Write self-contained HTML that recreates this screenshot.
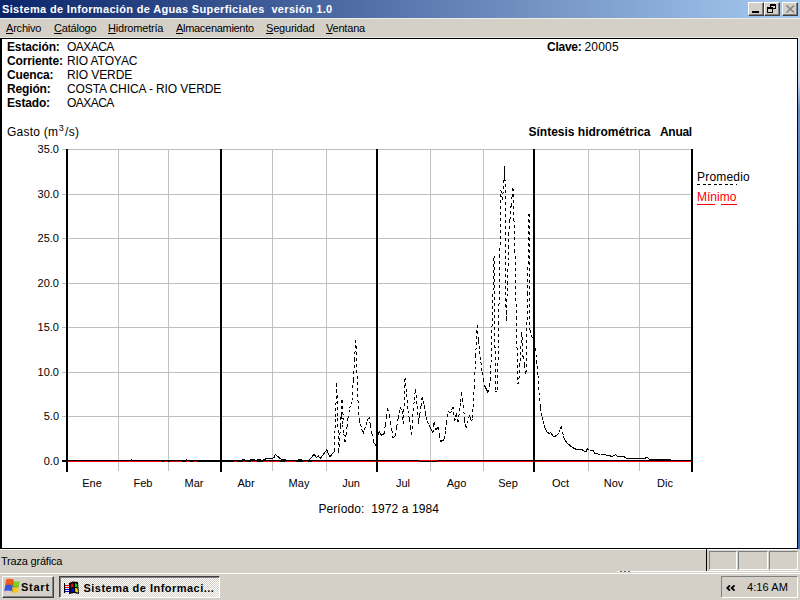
<!DOCTYPE html>
<html><head><meta charset="utf-8"><style>
*{margin:0;padding:0;box-sizing:border-box}
html,body{width:800px;height:600px;overflow:hidden;background:#D4D0C8;font-family:"Liberation Sans",sans-serif;font-size:11px;color:#000}
.abs{position:absolute;white-space:nowrap}
#title{left:0;top:0;width:800px;height:18px;background:linear-gradient(to right,#0A246A,#A6CAF0)}
.tb{position:absolute;top:2px;width:16px;height:14px;background:#D4D0C8;border-top:1px solid #fff;border-left:1px solid #fff;border-right:1px solid #404040;border-bottom:1px solid #404040;box-shadow:inset -1px -1px 0 #808080}
#menu{left:0;top:18px;width:800px;height:20px;background:#D4D0C8}
.mu{text-decoration:underline;text-underline-offset:1px}
#content{left:0;top:38px;width:798px;height:511px;background:#fff;border-style:solid;border-color:#000;border-width:1px 1px 1px 2px}
#desk{left:798px;top:38px;width:2px;height:511px;background:linear-gradient(to bottom,#d4e2f4 0,#c4d6ee 45px,#6a92cc 70px,#4672b8 200px,#3c68b0 100%)}
#status{left:0;top:549px;width:800px;height:24px;background:#D4D0C8}
.pnl{position:absolute;top:2px;height:19px;border-style:solid;border-width:1px;border-color:#808080 #fff #fff #808080}
#taskbar{left:0;top:573px;width:800px;height:27px;background:#D4D0C8;border-top:1px solid #fff}
.btn{position:absolute;border-style:solid;border-width:1px;border-color:#fff #404040 #404040 #fff;box-shadow:inset -1px -1px 0 #808080}
.btnp{position:absolute;border-style:solid;border-width:1px;border-color:#404040 #fff #fff #404040;box-shadow:inset 1px 1px 0 #808080;background:repeating-conic-gradient(#fff 0 25%,#D4D0C8 0 50%) 0 0/2px 2px}

</style></head><body>
<div id="title" class="abs">
<div class="abs" style="left:2px;top:3px;color:#fff;font-weight:bold;font-size:11px;line-height:13px;letter-spacing:0.33px">Sistema de Información de Aguas Superficiales&nbsp; versión 1.0</div>
<div class="tb" style="left:748px"><div class="abs" style="left:3px;top:8px;width:7px;height:2px;background:#000"></div></div>
<div class="tb" style="left:764px"><div class="abs" style="left:5px;top:1px;width:6px;height:5px;border:1px solid #000;border-top-width:2px"></div><div class="abs" style="left:2px;top:4px;width:6px;height:6px;border:1px solid #000;border-top-width:2px;background:#D4D0C8"></div></div>
<div class="tb" style="left:782px"><svg class="abs" style="left:3px;top:2px" width="9" height="8"><path d="M0.5,0.5 L8,7.5 M8,0.5 L0.5,7.5" stroke="#808080" stroke-width="1.4"/></svg></div>
</div>
<div id="menu" class="abs"><div class="abs" style="left:0;top:0;width:800px;height:1px;background:#EEECE6"></div><div class="abs" style="left:0;top:19px;width:800px;height:1px;background:#EAE8E2"></div>
<div class="abs" style="left:6px;top:5px;font-size:11px;line-height:11px;letter-spacing:-0.2px"><span class="mu">A</span>rchivo</div>
<div class="abs" style="left:54px;top:5px;font-size:11px;line-height:11px;letter-spacing:-0.2px"><span class="mu">C</span>atálogo</div>
<div class="abs" style="left:108px;top:5px;font-size:11px;line-height:11px;letter-spacing:-0.2px"><span class="mu">H</span>idrometría</div>
<div class="abs" style="left:176px;top:5px;font-size:11px;line-height:11px;letter-spacing:-0.3px"><span class="mu">A</span>lmacenamiento</div>
<div class="abs" style="left:266px;top:5px;font-size:11px;line-height:11px;letter-spacing:-0.2px"><span class="mu">S</span>eguridad</div>
<div class="abs" style="left:326px;top:5px;font-size:11px;line-height:11px;letter-spacing:-0.2px"><span class="mu">V</span>entana</div>
</div>
<div id="content" class="abs"></div>
<div id="desk" class="abs"></div>
<div id="status" class="abs"><div class="abs" style="left:0;top:0;width:797px;height:1px;background:#fff"></div>
<div class="abs" style="left:1px;top:7px;font-size:11px;line-height:11px;letter-spacing:-0.2px">Traza gráfica</div>
<div class="abs" style="left:617px;top:22px;width:183px;height:1px;background:#fff"></div>
<div class="abs" style="left:620px;top:22px;width:2px;height:1px;background:#606060"></div>
<div class="abs" style="left:624px;top:22px;width:2px;height:1px;background:#606060"></div>
<div class="abs" style="left:628px;top:22px;width:2px;height:1px;background:#606060"></div>
<div class="abs" style="left:706px;top:0;width:1px;height:22px;background:#000"></div>
<div class="pnl" style="left:709px;width:28px"></div>
<div class="pnl" style="left:738px;width:30px"></div>
<div class="pnl" style="left:769px;width:29px"></div>
</div>
<div id="taskbar" class="abs">
<div class="btn" style="left:2px;top:2px;width:52px;height:22px">
<svg class="abs" style="left:0;top:0" width="18" height="18" viewBox="0 0 18 18">
<path d="M3,2.5 Q6.5,1 10.5,2.5 L9.8,8.3 Q6,7 2.2,8.3 Z" fill="#F05A1A"/>
<path d="M10.5,4 Q13.5,5 16.5,4 L15.8,9.8 Q12.8,10.6 9.8,9.6 Z" fill="#78D020"/>
<path d="M2.2,8.5 Q6,7.2 9.6,8.6 L8.8,14.2 Q5,13 1.3,14.2 Z" fill="#3858E0"/>
<path d="M9.8,10 Q12.8,10.9 15.7,10 L15,15.5 Q11.8,16.4 9,15.3 Z" fill="#F6CC12"/>
<path d="M10.3,2.6 L9.5,15.3 M2.2,8.4 Q6,7.1 9.7,8.5 L9.8,9.7 Q12.8,10.7 15.8,9.9" stroke="#3a3a30" stroke-width="0.6" fill="none" opacity="0.5"/>
</svg>
<div class="abs" style="left:18px;top:5px;font-size:11px;line-height:11px;font-weight:bold;letter-spacing:0.75px">Start</div>
</div>
<div class="btnp" style="left:59px;top:2px;width:161px;height:22px">
<svg class="abs" style="left:4px;top:4px" width="16" height="14" viewBox="0 0 16 14">
<rect x="0" y="2" width="1" height="10" fill="#000"/>
<rect x="1" y="4" width="4" height="1" fill="#E00"/><rect x="1" y="6" width="4" height="1" fill="#E00"/><rect x="1" y="8" width="4" height="1" fill="#00E"/><rect x="1" y="10" width="4" height="1" fill="#00E"/>
<path d="M5,2 L9,0.5 L14,1 L15,13 L10,12 L5,13 Z" fill="#000"/>
<path d="M7,3 L9,2 L9.5,6 L7,6.5 Z" fill="#E00"/><path d="M11,2 L13,3 L13.5,6.5 L11,6 Z" fill="#0C0"/>
<path d="M7,7.5 L9.5,7 L10,11 L7,11.5 Z" fill="#00E"/><path d="M11,7 L13.5,7.5 L14,11.5 L11.5,11 Z" fill="#EE0"/>
</svg>
<div class="abs" style="left:23.5px;top:6px;font-size:11px;line-height:11px;font-weight:bold;letter-spacing:0.48px">Sistema de Informaci...</div>
</div>
<div class="abs" style="left:721px;top:2px;width:77px;height:22px;border-style:solid;border-width:1px;border-color:#808080 #fff #fff #808080">
<svg class="abs" style="left:4px;top:8px" width="10" height="6" viewBox="0 0 10 6"><path d="M4,0.3 L1.2,3 L4,5.7 M8.5,0.3 L5.7,3 L8.5,5.7" stroke="#000" stroke-width="1.8" fill="none"/></svg>
<div class="abs" style="left:25px;top:5px;font-size:11px;line-height:11px;letter-spacing:0.1px">4:16 AM</div>
</div>
</div>

<svg class="abs" style="left:0;top:0" width="800" height="600" viewBox="0 0 800 600"><rect x="62" y="149" width="630" height="1" fill="#C0C0C0"/><rect x="62" y="194" width="630" height="1" fill="#C0C0C0"/><rect x="62" y="238" width="630" height="1" fill="#C0C0C0"/><rect x="62" y="283" width="630" height="1" fill="#C0C0C0"/><rect x="62" y="327" width="630" height="1" fill="#C0C0C0"/><rect x="62" y="372" width="630" height="1" fill="#C0C0C0"/><rect x="62" y="416" width="630" height="1" fill="#C0C0C0"/><rect x="118" y="149" width="1" height="322" fill="#C0C0C0"/><rect x="168" y="149" width="1" height="322" fill="#C0C0C0"/><rect x="272" y="149" width="1" height="322" fill="#C0C0C0"/><rect x="326" y="149" width="1" height="322" fill="#C0C0C0"/><rect x="430" y="149" width="1" height="322" fill="#C0C0C0"/><rect x="483" y="149" width="1" height="322" fill="#C0C0C0"/><rect x="588" y="149" width="1" height="322" fill="#C0C0C0"/><rect x="639" y="149" width="1" height="322" fill="#C0C0C0"/><rect x="62" y="460" width="6" height="2" fill="#000"/><rect x="68" y="460" width="623" height="1" fill="#000"/><rect x="68" y="461" width="623" height="1" fill="#FF0000"/><rect x="162" y="461" width="2" height="1" fill="#000"/><rect x="168" y="461" width="2" height="1" fill="#000"/><rect x="182" y="461" width="4" height="1" fill="#000"/><rect x="190" y="461" width="3" height="1" fill="#000"/><rect x="197" y="461" width="37" height="1" fill="#000"/><rect x="237" y="461" width="6" height="1" fill="#000"/><rect x="245" y="461" width="6" height="1" fill="#000"/><rect x="257" y="461" width="6" height="1" fill="#000"/><rect x="280" y="461" width="5" height="1" fill="#000"/><rect x="296" y="461" width="7" height="1" fill="#000"/><rect x="308" y="461" width="4" height="1" fill="#000"/><rect x="419" y="460" width="18" height="1" fill="#FF0000"/><rect x="419" y="461" width="18" height="1" fill="#000"/><rect x="66" y="149" width="2" height="323" fill="#000"/><rect x="220" y="149" width="2" height="323" fill="#000"/><rect x="376" y="149" width="2" height="323" fill="#000"/><rect x="533" y="149" width="2" height="323" fill="#000"/><rect x="691" y="149" width="2" height="323" fill="#000"/><path d="M68.00,460.00L69.68,460.00M69.68,460.00L71.37,460.00M71.37,460.00L73.05,460.00M73.05,460.00L74.74,460.00M74.74,460.00L76.42,460.00M76.42,460.00L78.11,460.00M78.11,460.00L79.79,460.00M79.79,460.00L81.47,460.00M81.47,460.00L83.16,460.00M83.16,460.00L84.84,460.00M84.84,460.00L86.53,460.00M86.53,460.00L88.21,460.00M88.21,460.00L89.89,460.00M89.89,460.00L91.58,460.00M91.58,460.00L93.26,460.00M93.26,460.00L94.95,460.00M94.95,460.00L96.63,460.00M96.63,460.00L98.32,460.00M98.32,460.00L100.00,460.00M100.00,460.00L101.67,460.00M101.67,460.00L103.33,460.00M103.33,460.00L105.00,460.00M105.00,460.00L106.67,460.00M106.67,460.00L108.33,460.00M108.33,460.00L110.00,460.00M110.00,460.00L111.67,460.00M111.67,460.00L113.33,460.00M113.33,460.00L115.00,460.00M115.00,460.00L116.67,460.00M116.67,460.00L118.33,460.00M118.33,460.00L120.00,460.00M120.00,460.00L121.67,460.00M121.67,460.00L123.33,460.00M123.33,460.00L125.00,460.00M125.00,460.00L126.67,460.00M126.67,460.00L128.33,460.00M128.33,460.00L130.00,460.00M130.00,460.00L131.00,459.00M131.00,459.00L132.00,460.00M132.00,460.00L133.65,460.00M133.65,460.00L135.29,460.00M135.29,460.00L136.94,460.00M136.94,460.00L138.59,460.00M138.59,460.00L140.24,460.00M140.24,460.00L141.88,460.00M141.88,460.00L143.53,460.00M143.53,460.00L145.18,460.00M145.18,460.00L146.82,460.00M146.82,460.00L148.47,460.00M148.47,460.00L150.12,460.00M150.12,460.00L151.76,460.00M151.76,460.00L153.41,460.00M153.41,460.00L155.06,460.00M155.06,460.00L156.71,460.00M156.71,460.00L158.35,460.00M158.35,460.00L160.00,460.00M160.00,460.00L161.67,460.00M161.67,460.00L163.33,460.00M163.33,460.00L165.00,460.00M165.00,460.00L166.67,460.00M166.67,460.00L168.33,460.00M168.33,460.00L170.00,460.00M170.00,460.00L171.67,460.00M171.67,460.00L173.33,460.00M173.33,460.00L175.00,460.00M175.00,460.00L176.67,460.00M176.67,460.00L178.33,460.00M178.33,460.00L180.00,460.00M180.00,460.00L181.67,460.00M181.67,460.00L183.33,460.00M183.33,460.00L185.00,460.00M185.00,460.00L186.00,459.00M186.00,459.00L187.00,460.00M187.00,460.00L188.62,460.00M188.62,460.00L190.25,460.00M190.25,460.00L191.88,460.00M191.88,460.00L193.50,460.00M193.50,460.00L195.12,460.00M195.12,460.00L196.75,460.00M196.75,460.00L198.38,460.00M198.38,460.00L200.00,460.00M200.00,460.00L201.67,460.00M201.67,460.00L203.33,460.00M203.33,460.00L205.00,460.00M205.00,460.00L206.67,460.00M206.67,460.00L208.33,460.00M208.33,460.00L210.00,460.00M210.00,460.00L211.67,460.00M211.67,460.00L213.33,460.00M213.33,460.00L215.00,460.00M215.00,460.00L216.67,460.00M216.67,460.00L218.33,460.00M218.33,460.00L220.00,460.00M220.00,460.00L221.67,460.00M221.67,460.00L223.33,460.00M223.33,460.00L225.00,460.00M225.00,460.00L226.67,460.00M226.67,460.00L228.33,460.00M228.33,460.00L230.00,460.00M230.00,460.00L231.67,460.00M231.67,460.00L233.33,460.00M233.33,460.00L235.00,460.00M235.00,460.00L236.67,460.00M236.67,460.00L238.33,460.00M238.33,460.00L240.00,460.00M240.00,460.00L241.17,459.67M241.17,459.67L242.33,459.33M242.33,459.33L243.50,459.00M243.50,459.00L244.75,459.50M244.75,459.50L246.00,460.00M246.00,460.00L247.40,459.80M247.40,459.80L248.80,459.60M248.80,459.60L250.20,459.40M250.20,459.40L251.60,459.20M251.60,459.20L253.00,459.00M253.00,459.00L254.50,459.50M254.50,459.50L256.00,460.00M256.00,460.00L257.00,459.50M257.00,459.50L258.00,459.00M258.00,459.00L259.33,459.33M259.33,459.33L260.67,459.67M260.67,459.67L262.00,460.00M262.00,460.00L263.50,459.25M263.50,459.25L265.00,458.50M265.00,458.50L266.67,458.33M266.67,458.33L268.33,458.17M268.33,458.17L270.00,458.00M270.00,458.00L271.17,457.80M271.17,457.80L272.33,457.60M272.33,457.60L273.50,457.40M273.50,457.40L274.10,453.30M274.10,453.30L275.65,454.60M275.65,454.60L277.20,455.90M277.20,455.90L278.75,457.20M278.75,457.20L280.30,458.50M280.30,458.50L281.60,458.75M281.60,458.75L282.90,459.00M282.90,459.00L284.20,459.25M284.20,459.25L285.50,459.50M285.50,459.50L287.08,459.58M287.08,459.58L288.67,459.67M288.67,459.67L290.25,459.75M290.25,459.75L291.83,459.83M291.83,459.83L293.42,459.92M293.42,459.92L295.00,460.00M295.00,460.00L296.67,459.67M296.67,459.67L298.33,459.33M298.33,459.33L300.00,459.00M300.00,459.00L301.50,459.50M301.50,459.50L303.00,460.00M303.00,460.00L304.67,460.00M304.67,460.00L306.33,460.00M306.33,460.00L308.00,460.00M308.00,460.00L309.50,458.40M309.50,458.40L311.00,456.80M311.00,456.80L312.50,455.20M312.50,455.20L314.00,453.60M314.00,453.60L315.50,457.80M315.50,457.80L316.65,456.40M316.65,456.40L317.80,455.00M317.80,455.00L319.30,458.50M319.30,458.50L320.72,456.66M320.72,456.66L322.14,454.82M322.14,454.82L323.56,452.98M323.56,452.98L324.98,451.14M324.98,451.14L326.40,449.30M326.40,449.30L327.85,452.80M327.85,452.80L329.30,456.30M329.30,456.30L330.80,454.53M330.80,454.53L332.30,452.77M332.30,452.77L333.80,451.00M333.80,451.00L335.00,416.85M335.00,416.85L336.20,382.70M336.20,382.70L337.25,417.75M337.25,417.75L338.30,452.80M338.30,452.80L339.90,426.00M339.90,426.00L341.50,399.20M341.50,399.20L343.00,420.00M343.00,420.00L341.00,415.00M341.00,415.00L342.17,424.00M342.17,424.00L343.33,433.00M343.33,433.00L344.50,442.00M344.50,442.00L345.50,434.50M345.50,434.50L346.50,426.25M346.50,426.25L347.50,418.00M347.50,418.00L349.00,408.00M349.00,408.00L350.25,404.00M350.25,404.00L351.50,400.00M351.50,400.00L352.77,379.77M352.77,379.77L354.03,359.53M354.03,359.53L355.30,339.30M355.30,339.30L356.40,369.65M356.40,369.65L357.50,400.00M357.50,400.00L358.70,419.00M358.70,419.00L360.00,423.83M360.00,423.83L361.30,428.67M361.30,428.67L362.60,433.50M362.60,433.50L364.05,429.12M364.05,429.12L365.50,424.75M365.50,424.75L366.95,420.38M366.95,420.38L368.40,416.00M368.40,416.00L369.93,424.50M369.93,424.50L371.47,433.00M371.47,433.00L373.00,441.50M373.00,441.50L374.23,443.23M374.23,443.23L375.47,444.97M375.47,444.97L376.70,446.70M376.70,446.70L378.20,430.00M378.20,430.00L379.35,432.35M379.35,432.35L380.50,434.70M380.50,434.70L382.00,433.95M382.00,433.95L383.50,433.20M383.50,433.20L384.73,424.70M384.73,424.70L385.97,416.20M385.97,416.20L387.20,407.70M387.20,407.70L388.70,414.85M388.70,414.85L390.20,422.00M390.20,422.00L391.35,429.50M391.35,429.50L392.50,437.00M392.50,437.00L393.60,436.25M393.60,436.25L394.70,435.50M394.70,435.50L396.20,426.50M396.20,426.50L397.70,417.50M397.70,417.50L398.85,412.25M398.85,412.25L400.00,407.00M400.00,407.00L401.50,410.70M401.50,410.70L403.00,423.50M403.00,423.50L404.50,377.00M404.50,377.00L406.00,393.50M406.00,393.50L407.50,410.00M407.50,410.00L408.73,418.23M408.73,418.23L409.97,426.47M409.97,426.47L411.20,434.70M411.20,434.70L412.70,410.00M412.70,410.00L413.85,399.10M413.85,399.10L415.00,388.20M415.00,388.20L416.50,405.85M416.50,405.85L418.00,423.50M418.00,423.50L419.23,414.50M419.23,414.50L420.47,405.50M420.47,405.50L421.70,396.50M421.70,396.50L422.85,400.75M422.85,400.75L424.00,405.00M424.00,405.00L425.00,413.00M425.00,413.00L426.00,417.00M426.00,417.00L427.00,421.00M427.00,421.00L428.50,424.50M428.50,424.50L430.00,428.00M430.00,428.00L431.25,430.00M431.25,430.00L432.50,432.00M432.50,432.00L433.50,422.00M433.50,422.00L435.00,430.00M435.00,430.00L436.25,428.50M436.25,428.50L437.50,427.00M437.50,427.00L439.00,434.00M439.00,434.00L440.00,441.00M440.00,441.00L441.33,440.33M441.33,440.33L442.67,439.67M442.67,439.67L444.00,439.00M444.00,439.00L445.00,430.00M445.00,430.00L446.00,422.00M446.00,422.00L447.00,416.50M447.00,416.50L448.00,411.00M448.00,411.00L449.00,412.00M449.00,412.00L450.00,413.00M450.00,413.00L451.25,409.50M451.25,409.50L452.50,406.00M452.50,406.00L454.00,421.00M454.00,421.00L455.00,417.00M455.00,417.00L456.00,413.00M456.00,413.00L457.50,422.00M457.50,422.00L459.00,411.00M459.00,411.00L460.00,401.50M460.00,401.50L461.00,392.00M461.00,392.00L462.00,398.50M462.00,398.50L463.00,405.00M463.00,405.00L464.00,420.00M464.00,420.00L465.00,424.00M465.00,424.00L466.00,428.00M466.00,428.00L467.00,423.00M467.00,423.00L468.00,418.00M468.00,418.00L469.00,415.00M469.00,415.00L470.00,418.00M470.00,418.00L471.00,421.00M471.00,421.00L472.00,418.00M472.00,418.00L473.57,387.00M473.57,387.00L475.13,356.00M475.13,356.00L476.70,325.00M476.70,325.00L478.00,340.00M478.00,340.00L479.17,350.67M479.17,350.67L480.33,361.33M480.33,361.33L481.50,372.00M481.50,372.00L482.75,378.50M482.75,378.50L484.00,385.00M484.00,385.00L485.17,387.33M485.17,387.33L486.33,389.67M486.33,389.67L487.50,392.00M487.50,392.00L488.75,386.00M488.75,386.00L490.00,380.00M490.00,380.00L491.17,338.33M491.17,338.33L492.33,296.67M492.33,296.67L493.50,255.00M493.50,255.00L495.00,391.50M495.00,391.50L496.00,390.75M496.00,390.75L497.00,390.00M497.00,390.00L498.17,323.33M498.17,323.33L499.33,256.67M499.33,256.67L500.50,190.00M500.50,190.00L502.00,200.00M502.00,200.00L503.20,183.00M503.20,183.00L504.40,166.00M504.40,166.00L505.60,320.00M505.60,320.00L506.50,296.00M506.50,296.00L507.40,272.00M507.40,272.00L508.30,234.00M508.30,234.00L509.45,219.50M509.45,219.50L510.60,205.00M510.60,205.00L511.55,196.50M511.55,196.50L512.50,188.00M512.50,188.00L513.45,219.00M513.45,219.00L514.40,250.00M514.40,250.00L515.85,317.00M515.85,317.00L517.30,384.00M517.30,384.00L518.50,378.00M518.50,378.00L519.90,354.50M519.90,354.50L521.30,331.00M521.30,331.00L522.50,356.00M522.50,356.00L524.00,364.50M524.00,364.50L525.50,373.00M525.50,373.00L527.00,293.50M527.00,293.50L528.50,214.00M528.50,214.00L529.50,330.00M529.50,330.00L531.00,335.00M531.00,335.00L532.50,340.00M532.50,340.00L533.75,344.00M533.75,344.00L535.00,348.00M535.00,348.00L536.00,360.00M536.00,360.00L537.50,375.00M537.50,375.00L538.50,392.00M538.50,392.00L540.00,407.00M540.00,407.00L541.50,417.00M541.50,417.00L542.50,421.00M542.50,421.00L543.50,425.00M543.50,425.00L544.75,428.00M544.75,428.00L546.00,431.00M546.00,431.00L547.25,432.00M547.25,432.00L548.50,433.00M548.50,433.00L550.00,432.00M550.00,432.00L551.50,434.00M551.50,434.00L553.00,436.00M553.00,436.00L554.33,435.67M554.33,435.67L555.67,435.33M555.67,435.33L557.00,435.00M557.00,435.00L558.17,432.00M558.17,432.00L559.33,429.00M559.33,429.00L560.50,426.00M560.50,426.00L562.00,432.00M562.00,432.00L563.00,435.50M563.00,435.50L564.00,439.00M564.00,439.00L565.50,441.00M565.50,441.00L567.00,443.00M567.00,443.00L568.67,444.33M568.67,444.33L570.33,445.67M570.33,445.67L572.00,447.00M572.00,447.00L573.33,447.67M573.33,447.67L574.67,448.33M574.67,448.33L576.00,449.00M576.00,449.00L577.50,449.12M577.50,449.12L579.00,449.25M579.00,449.25L580.50,449.38M580.50,449.38L582.00,449.50M582.00,449.50L583.50,450.75M583.50,450.75L585.00,452.00M585.00,452.00L586.00,450.00M586.00,450.00L587.00,448.00M587.00,448.00L588.00,449.00M588.00,449.00L589.00,450.00M589.00,450.00L590.33,450.00M590.33,450.00L591.67,450.00M591.67,450.00L593.00,450.00M593.00,450.00L594.00,453.00M594.00,453.00L595.50,453.25M595.50,453.25L597.00,453.50M597.00,453.50L598.50,453.75M598.50,453.75L600.00,454.00M600.00,454.00L601.50,454.00M601.50,454.00L603.00,454.00M603.00,454.00L604.67,454.33M604.67,454.33L606.33,454.67M606.33,454.67L608.00,455.00M608.00,455.00L609.33,455.33M609.33,455.33L610.67,455.67M610.67,455.67L612.00,456.00M612.00,456.00L613.50,455.00M613.50,455.00L615.00,454.00M615.00,454.00L616.00,455.00M616.00,455.00L617.00,456.00M617.00,456.00L618.40,456.10M618.40,456.10L619.80,456.20M619.80,456.20L621.20,456.30M621.20,456.30L622.60,456.40M622.60,456.40L624.00,456.50M624.00,456.50L625.00,457.50M625.00,457.50L626.67,457.50M626.67,457.50L628.33,457.50M628.33,457.50L630.00,457.50M630.00,457.50L631.67,457.50M631.67,457.50L633.33,457.50M633.33,457.50L635.00,457.50M635.00,457.50L636.67,457.50M636.67,457.50L638.33,457.50M638.33,457.50L640.00,457.50M640.00,457.50L641.67,457.50M641.67,457.50L643.33,457.50M643.33,457.50L645.00,457.50M645.00,457.50L646.00,457.25M646.00,457.25L647.00,457.00M647.00,457.00L648.00,458.50M648.00,458.50L649.69,458.50M649.69,458.50L651.38,458.50M651.38,458.50L653.08,458.50M653.08,458.50L654.77,458.50M654.77,458.50L656.46,458.50M656.46,458.50L658.15,458.50M658.15,458.50L659.85,458.50M659.85,458.50L661.54,458.50M661.54,458.50L663.23,458.50M663.23,458.50L664.92,458.50M664.92,458.50L666.62,458.50M666.62,458.50L668.31,458.50M668.31,458.50L670.00,458.50M670.00,458.50L670.00,459.50M670.00,459.50L671.62,459.50M671.62,459.50L673.23,459.50M673.23,459.50L674.85,459.50M674.85,459.50L676.46,459.50M676.46,459.50L678.08,459.50M678.08,459.50L679.69,459.50M679.69,459.50L681.31,459.50M681.31,459.50L682.92,459.50M682.92,459.50L684.54,459.50M684.54,459.50L686.15,459.50M686.15,459.50L687.77,459.50M687.77,459.50L689.38,459.50M689.38,459.50L691.00,459.50" transform="translate(0.5,0.5)" stroke="#000" stroke-width="1" stroke-dasharray="3 3" fill="none" shape-rendering="crispEdges"/></svg>
<svg class="abs" style="left:0;top:0" width="800" height="600">
<path d="M697,184.5 L737,184.5" stroke="#000" stroke-dasharray="3 2.5" shape-rendering="crispEdges"/>
<rect x="697" y="204" width="18" height="1" fill="#FF0000"/><rect x="721" y="204" width="16" height="1" fill="#FF0000"/>
</svg>
<div class="abs" style="top:40.54px;font-size:12px;line-height:12px;color:#000;font-weight:bold;letter-spacing:-0.15px;left:7px;">Estación:</div><div class="abs" style="top:41.14px;font-size:12px;line-height:12px;color:#000;letter-spacing:-0.55px;left:67px;">OAXACA</div><div class="abs" style="top:54.54px;font-size:12px;line-height:12px;color:#000;font-weight:bold;letter-spacing:-0.15px;left:7px;">Corriente:</div><div class="abs" style="top:55.14px;font-size:12px;line-height:12px;color:#000;letter-spacing:-0.1px;left:67px;">RIO ATOYAC</div><div class="abs" style="top:68.54px;font-size:12px;line-height:12px;color:#000;font-weight:bold;letter-spacing:-0.15px;left:7px;">Cuenca:</div><div class="abs" style="top:69.14px;font-size:12px;line-height:12px;color:#000;letter-spacing:-0.1px;left:67px;">RIO VERDE</div><div class="abs" style="top:82.54px;font-size:12px;line-height:12px;color:#000;font-weight:bold;letter-spacing:-0.15px;left:7px;">Región:</div><div class="abs" style="top:83.14px;font-size:12px;line-height:12px;color:#000;letter-spacing:-0.1px;left:67px;">COSTA CHICA - RIO VERDE</div><div class="abs" style="top:96.54px;font-size:12px;line-height:12px;color:#000;font-weight:bold;letter-spacing:-0.15px;left:7px;">Estado:</div><div class="abs" style="top:97.14px;font-size:12px;line-height:12px;color:#000;letter-spacing:-0.55px;left:67px;">OAXACA</div><div class="abs" style="top:40.54px;font-size:12px;line-height:12px;color:#000;font-weight:bold;letter-spacing:-0.25px;left:547px;">Clave:</div><div class="abs" style="top:41.14px;font-size:12px;line-height:12px;color:#000;letter-spacing:0.2px;left:584.5px;">20005</div><div class="abs" style="top:125.64px;font-size:12px;line-height:12px;color:#000;letter-spacing:0.25px;left:7px;">Gasto (m<span style="font-size:9px;position:relative;top:-5px;margin:0 1px 0 0.5px">3</span>/s)</div><div class="abs" style="top:126.04px;font-size:12px;line-height:12px;color:#000;font-weight:bold;left:528.5px;">Síntesis hidrométrica</div><div class="abs" style="top:126.04px;font-size:12px;line-height:12px;color:#000;font-weight:bold;letter-spacing:-0.3px;left:660px;">Anual</div><div class="abs" style="top:143.69px;font-size:11px;line-height:11px;color:#000;right:741px;">35.0</div><div class="abs" style="top:188.69px;font-size:11px;line-height:11px;color:#000;right:741px;">30.0</div><div class="abs" style="top:232.69px;font-size:11px;line-height:11px;color:#000;right:741px;">25.0</div><div class="abs" style="top:277.69px;font-size:11px;line-height:11px;color:#000;right:741px;">20.0</div><div class="abs" style="top:321.69px;font-size:11px;line-height:11px;color:#000;right:741px;">15.0</div><div class="abs" style="top:366.69px;font-size:11px;line-height:11px;color:#000;right:741px;">10.0</div><div class="abs" style="top:410.69px;font-size:11px;line-height:11px;color:#000;right:741px;">5.0</div><div class="abs" style="top:455.69px;font-size:11px;line-height:11px;color:#000;right:741px;">0.0</div><div class="abs" style="top:477.69px;font-size:11px;line-height:11px;color:#000;left:-8.0px;width:200px;text-align:center;">Ene</div><div class="abs" style="top:477.69px;font-size:11px;line-height:11px;color:#000;left:43.0px;width:200px;text-align:center;">Feb</div><div class="abs" style="top:477.69px;font-size:11px;line-height:11px;color:#000;left:94.0px;width:200px;text-align:center;">Mar</div><div class="abs" style="top:477.69px;font-size:11px;line-height:11px;color:#000;left:146.0px;width:200px;text-align:center;">Abr</div><div class="abs" style="top:477.69px;font-size:11px;line-height:11px;color:#000;left:199.0px;width:200px;text-align:center;">May</div><div class="abs" style="top:477.69px;font-size:11px;line-height:11px;color:#000;left:251.0px;width:200px;text-align:center;">Jun</div><div class="abs" style="top:477.69px;font-size:11px;line-height:11px;color:#000;left:303.0px;width:200px;text-align:center;">Jul</div><div class="abs" style="top:477.69px;font-size:11px;line-height:11px;color:#000;left:356.5px;width:200px;text-align:center;">Ago</div><div class="abs" style="top:477.69px;font-size:11px;line-height:11px;color:#000;left:408.0px;width:200px;text-align:center;">Sep</div><div class="abs" style="top:477.69px;font-size:11px;line-height:11px;color:#000;left:460.5px;width:200px;text-align:center;">Oct</div><div class="abs" style="top:477.69px;font-size:11px;line-height:11px;color:#000;left:513.5px;width:200px;text-align:center;">Nov</div><div class="abs" style="top:477.69px;font-size:11px;line-height:11px;color:#000;left:565.0px;width:200px;text-align:center;">Dic</div><div class="abs" style="top:170.84px;font-size:12px;line-height:12px;color:#000;letter-spacing:0.2px;left:697px;">Promedio</div><div class="abs" style="top:190.84px;font-size:12px;line-height:12px;color:#FF0000;left:697px;">Mínimo</div><div class="abs" style="top:502.84px;font-size:12px;line-height:12px;color:#000;letter-spacing:0.08px;left:278.7px;width:200px;text-align:center;">Período:&nbsp; 1972 a 1984</div>
</body></html>
